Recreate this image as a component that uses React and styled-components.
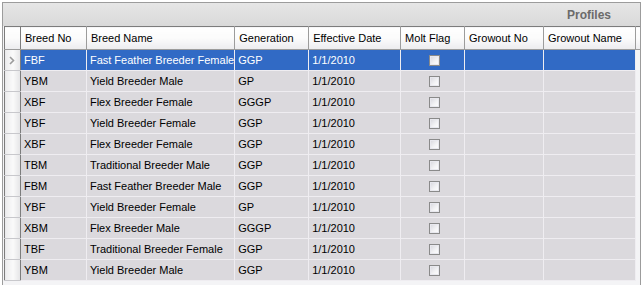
import React from "react";
import styled, { createGlobalStyle } from "styled-components";

const GlobalStyle = createGlobalStyle`
  body {
    margin: 0;
    background: #ffffff;
    font-family: "Liberation Sans", Arial, sans-serif;
  }
`;

const columns = [
  { key: "breedNo", title: "Breed No", width: 66 },
  { key: "breedName", title: "Breed Name", width: 148 },
  { key: "generation", title: "Generation", width: 74 },
  { key: "date", title: "Effective Date", width: 92 },
  { key: "molt", title: "Molt Flag", width: 64 },
  { key: "growoutNo", title: "Growout No", width: 79 },
  { key: "growoutName", title: "Growout Name", width: 92 },
];

const rows = [
  ["FBF", "Fast Feather Breeder Female", "GGP"],
  ["YBM", "Yield Breeder Male", "GP"],
  ["XBF", "Flex Breeder Female", "GGGP"],
  ["YBF", "Yield Breeder Female", "GGP"],
  ["XBF", "Flex Breeder Female", "GGP"],
  ["TBM", "Traditional Breeder Male", "GGP"],
  ["FBM", "Fast Feather Breeder Male", "GGP"],
  ["YBF", "Yield Breeder Female", "GP"],
  ["XBM", "Flex Breeder Male", "GGGP"],
  ["TBF", "Traditional Breeder Female", "GGP"],
  ["YBM", "Yield Breeder Male", "GGP"],
];

const Frame = styled.section`
  margin: 2px 0 0 2px;
  width: 639px;
  height: 290px;
  border: 1px solid #9c9c9c;
  background: #f4f4f6;
  box-sizing: border-box;
`;

const TitleBar = styled.header`
  height: 23px;
  display: flex;
  align-items: center;
  justify-content: flex-end;
  padding-right: 29px;
  background: linear-gradient(#e6e6e6, #d9d9d9);
  color: #6b6b6b;
  font-size: 12px;
  font-weight: bold;
`;

const Grid = styled.table`
  margin-left: 1px;
  border-collapse: collapse;
  table-layout: fixed;
  font-size: 11px;
  border-top: 1px solid #7c7c7c;
  border-left: 1px solid #7c7c7c;
`;

const HeadCell = styled.th`
  height: 22px;
  padding: 0 0 0 4px;
  text-align: left;
  font-weight: normal;
  color: #000;
  white-space: nowrap;
  overflow: hidden;
  background: linear-gradient(#ffffff, #fbfbfb 50%, #ececef);
  border-right: 1px solid #9c9c9c;
  border-bottom: 1px solid #9c9c9c;
`;

const CornerCell = styled(HeadCell)`
  padding: 0;
  border-right-color: #7c7c7c;
`;

const FillerHead = styled(HeadCell)`
  border-right: none;
`;

const Row = styled.tr`
  background: ${({ $selected }) => ($selected ? "#316ac5" : "#dbd9dd")};
  color: ${({ $selected }) => ($selected ? "#ffffff" : "#000000")};
`;

const Cell = styled.td`
  height: 20px;
  padding: 0 0 0 3px;
  white-space: nowrap;
  overflow: hidden;
  border-right: 1px solid #efedf1;
  border-bottom: 1px solid #efedf1;
  text-align: ${({ $center }) => ($center ? "center" : "left")};
`;

const RowHeader = styled.td`
  height: 20px;
  padding: 0;
  background: linear-gradient(90deg, #ececee, #fafafa 50%, #e4e4e6);
  border-right: 1px solid #7c7c7c;
  border-bottom: 1px solid #c8c8cc;
  color: #9a9a9a;
  text-align: center;
`;

const Filler = styled.td`
  background: #f4f4f6;
  padding: 0;
`;

const CheckBox = styled.span`
  display: inline-block;
  width: 11px;
  height: 11px;
  box-sizing: border-box;
  vertical-align: middle;
  border: 1px solid #8a8a8a;
  background: linear-gradient(135deg, #d6d6dc, #f4f4f6 60%, #ffffff);
  box-shadow: inset 0 0 0 1px #e8e8ee;
`;

const Arrow = () => (
  <svg width="6" height="9" viewBox="0 0 6 9" style={{ display: "block", margin: "0 auto" }}>
    <path d="M1 1 L4.5 4.5 L1 8" fill="none" stroke="#9c9c9c" strokeWidth="1.6" />
  </svg>
);

export default function App() {
  return (
    <>
      <GlobalStyle />
      <Frame>
        <TitleBar>Profiles</TitleBar>
        <Grid>
          <colgroup>
            <col style={{ width: 16 }} />
            {columns.map((c) => (
              <col key={c.key} style={{ width: c.width }} />
            ))}
            <col style={{ width: 4 }} />
          </colgroup>
          <thead>
            <tr>
              <CornerCell />
              {columns.map((c) => (
                <HeadCell key={c.key}>{c.title}</HeadCell>
              ))}
              <FillerHead />
            </tr>
          </thead>
          <tbody>
            {rows.map((r, i) => (
              <Row key={i} $selected={i === 0}>
                <RowHeader>{i === 0 && <Arrow />}</RowHeader>
                <Cell>{r[0]}</Cell>
                <Cell>{r[1]}</Cell>
                <Cell>{r[2]}</Cell>
                <Cell>1/1/2010</Cell>
                <Cell $center>
                  <CheckBox />
                </Cell>
                <Cell />
                <Cell />
                <Filler />
              </Row>
            ))}
          </tbody>
        </Grid>
      </Frame>
    </>
  );
}
